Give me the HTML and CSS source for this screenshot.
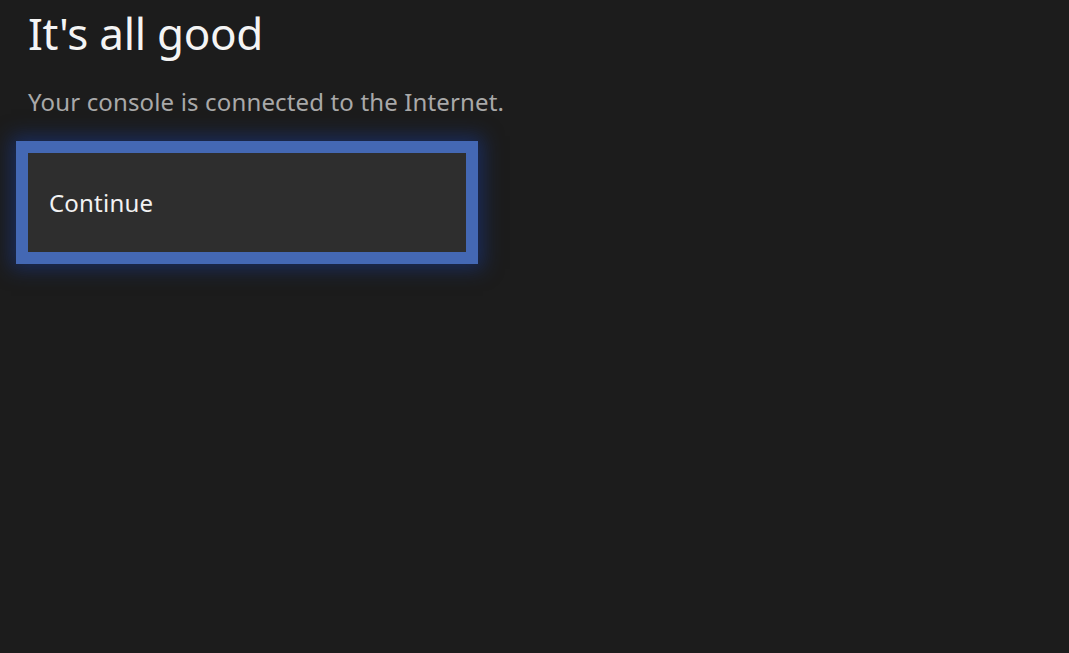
FILE: index.html
```html
<!DOCTYPE html>
<html>
<head>
<meta charset="utf-8">
<link rel="stylesheet" href="styles.css">
</head>
<body>
<main class="page">
  <h1 class="title">It's all good</h1>
  <p class="subtitle">Your console is connected to the Internet.</p>
  <button class="btn">Continue</button>
</main>
</body>
</html>
```

FILE: styles.css
```css
html, body {
  margin: 0;
  padding: 0;
  background: #1c1c1c;
  height: 100%;
}
.page {
  font-family: "Noto Sans", "Open Sans", sans-serif;
  padding: 3px 0 0 16px;
  display: flex;
  flex-direction: column;
  align-items: flex-start;
}
.title {
  margin: 0 0 0 12px;
  font-size: 44px;
  font-weight: 400;
  color: #f4f4f4;
  line-height: 60px;
  letter-spacing: -0.3px;
}
.subtitle {
  margin: 24px 0 0 12px;
  font-size: 24px;
  color: #a9a9a9;
  line-height: 30px;
  letter-spacing: 0.15px;
}
.btn {
  margin-top: 24px;
  width: 462px;
  height: 123px;
  box-sizing: border-box;
  border: 12px solid #4468b4;
  background: #2e2e2e;
  color: #f2f2f2;
  font-family: inherit;
  font-size: 24px;
  text-align: left;
  padding: 0 0 0 21px;
  box-shadow: 0 0 18px 5px rgba(25, 55, 135, 0.6);
  letter-spacing: 0.2px;
}
```
